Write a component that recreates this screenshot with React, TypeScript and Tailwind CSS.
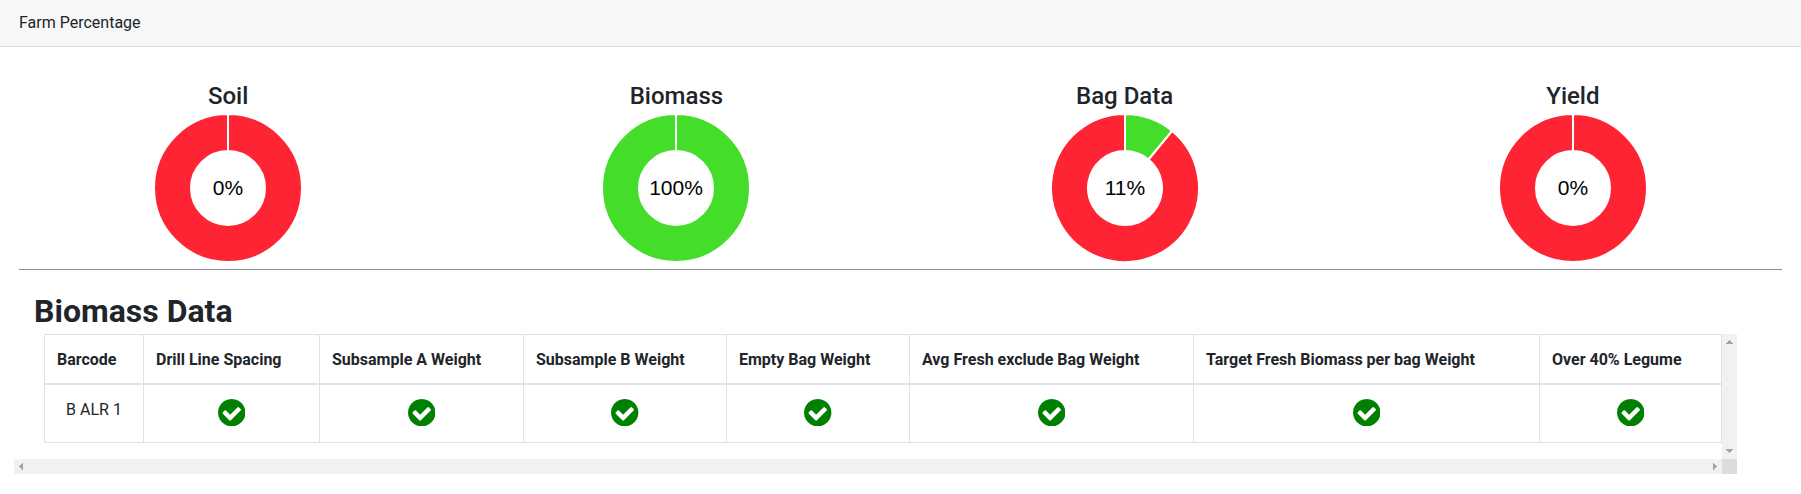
const RED = '#ff2433';
const GREEN = '#44dd29';

const charts = [
  { title: 'Soil', percent: 0 },
  { title: 'Biomass', percent: 100 },
  { title: 'Bag Data', percent: 11 },
  { title: 'Yield', percent: 0 },
];

const columns = [
  { label: 'Barcode', width: 'w-[99px]' },
  { label: 'Drill Line Spacing', width: 'w-[176px]' },
  { label: 'Subsample A Weight', width: 'w-[204px]' },
  { label: 'Subsample B Weight', width: 'w-[203px]' },
  { label: 'Empty Bag Weight', width: 'w-[183px]' },
  { label: 'Avg Fresh exclude Bag Weight', width: 'w-[284px]' },
  { label: 'Target Fresh Biomass per bag Weight', width: 'w-[346px]' },
  { label: 'Over 40% Legume', width: 'w-[183px]' },
];

const R = 74;
const r = 37;

function point(radius: number, fraction: number) {
  const a = fraction * 2 * Math.PI;
  return `${(radius * Math.sin(a)).toFixed(3)} ${(-radius * Math.cos(a)).toFixed(3)}`;
}

function slice(from: number, to: number) {
  const mid = (from + to) / 2;
  return [
    `M${point(R, from)}`,
    `A${R} ${R} 0 0 1 ${point(R, mid)}`,
    `A${R} ${R} 0 0 1 ${point(R, to)}`,
    `L${point(r, to)}`,
    `A${r} ${r} 0 0 0 ${point(r, mid)}`,
    `A${r} ${r} 0 0 0 ${point(r, from)}`,
    'Z',
  ].join('');
}

function Donut({ percent }: { percent: number }) {
  const f = percent / 100;
  return (
    <svg width="150" height="150" viewBox="-75 -75 150 150" className="block">
      {f > 0 && <path d={slice(0, f)} fill={GREEN} stroke="#fff" strokeWidth="2" />}
      {f < 1 && <path d={slice(f, 1)} fill={RED} stroke="#fff" strokeWidth="2" />}
      <text
        x="0"
        y="7"
        textAnchor="middle"
        fill="#000"
        className="font-['Liberation_Sans',Arial,sans-serif] text-[21px]"
      >
        {percent}%
      </text>
    </svg>
  );
}

function CheckCircle() {
  return (
    <svg width="27.43" height="27.43" viewBox="0 0 1536 1536" fill="#008000" className="mx-auto block">
      <path d="M1284 606q0-28-18-46l-91-90q-19-19-45-19t-45 19l-408 407-226-226q-19-19-45-19t-45 19l-91 90q-18 18-18 46 0 27 18 45l362 362q19 19 45 19 27 0 46-19l543-543q18-18 18-45zm252 162q0 209-103 385.5t-279.5 279.5-385.5 103-385.5-103-279.5-279.5-103-385.5 103-385.5 279.5-279.5 385.5-103 385.5 103 279.5 279.5 103 385.5z" />
    </svg>
  );
}

function Arrow({ d, w, h }: { d: string; w: number; h: number }) {
  return (
    <svg width={w} height={h} viewBox={`0 0 ${w} ${h}`} fill="#a3a3a3" shapeRendering="crispEdges" className="block">
      <path d={d} />
    </svg>
  );
}

export default function App() {
  return (
    <div className="h-[494px] overflow-hidden bg-white font-[Roboto,sans-serif] text-base text-[#212529]">
      <header className="flex h-[47px] items-center border-b border-[#d7d7d7] bg-[#f7f7f7] px-[19px] pb-px">
        Farm Percentage
      </header>

      <section className="grid grid-cols-4 px-1 pt-[35px]">
        {charts.map((c) => (
          <div key={c.title} className="flex flex-col items-center">
            <h4 className="h-[31px] text-2xl leading-[29px] font-medium">{c.title}</h4>
            <Donut percent={c.percent} />
          </div>
        ))}
      </section>

      <div className="mx-[19px] mt-[6px] h-px bg-[#8c8c8c]" />

      <section>
        <h2 className="mt-[22px] h-[42px] pl-[34px] text-[32px] leading-[38px] font-bold">Biomass Data</h2>
        <div className="ml-[14px] grid w-[1723px] grid-cols-[1708px_15px] grid-rows-[125px_15px]">
          <div className="pl-[30px]">
            <table className="w-[1678px] table-fixed border-separate border-spacing-0">
              <thead>
                <tr className="h-[51px]">
                  {columns.map((c) => (
                    <th
                      key={c.label}
                      className={`${c.width} border-t border-b-2 border-l border-[#dee2e6] pt-0.5 pr-0 pb-0 pl-3 text-left align-middle font-bold whitespace-nowrap last:border-r`}
                    >
                      {c.label}
                    </th>
                  ))}
                </tr>
              </thead>
              <tbody>
                <tr className="h-[58px]">
                  <td className="border-b border-l border-[#dee2e6] p-0 pt-[13px] text-center align-top">B ALR 1</td>
                  {columns.slice(1).map((c) => (
                    <td
                      key={c.label}
                      className="border-b border-l border-[#dee2e6] p-0 pt-[14px] align-top last:border-r"
                    >
                      <CheckCircle />
                    </td>
                  ))}
                </tr>
              </tbody>
            </table>
          </div>
          <div className="flex flex-col items-center justify-between bg-[#f1f1f1] py-[6px]">
            <Arrow w={7} h={4} d="M3 0h1v1h1v1h1v1h1v1H0V3h1V2h1V1h1z" />
            <Arrow w={7} h={4} d="M0 0h7v1H6v1H5v1H4v1H3V3H2V2H1V1H0z" />
          </div>
          <div className="flex items-center justify-between bg-[#f1f1f1] px-[5px]">
            <Arrow w={4} h={7} d="M4 0v7H3V6H2V5H1V4H0V3h1V2h1V1h1V0z" />
            <Arrow w={4} h={7} d="M0 0v7h1V6h1V5h1V4h1V3H3V2H2V1H1V0z" />
          </div>
          <div className="bg-[#dcdcdc]" />
        </div>
      </section>
    </div>
  );
}
